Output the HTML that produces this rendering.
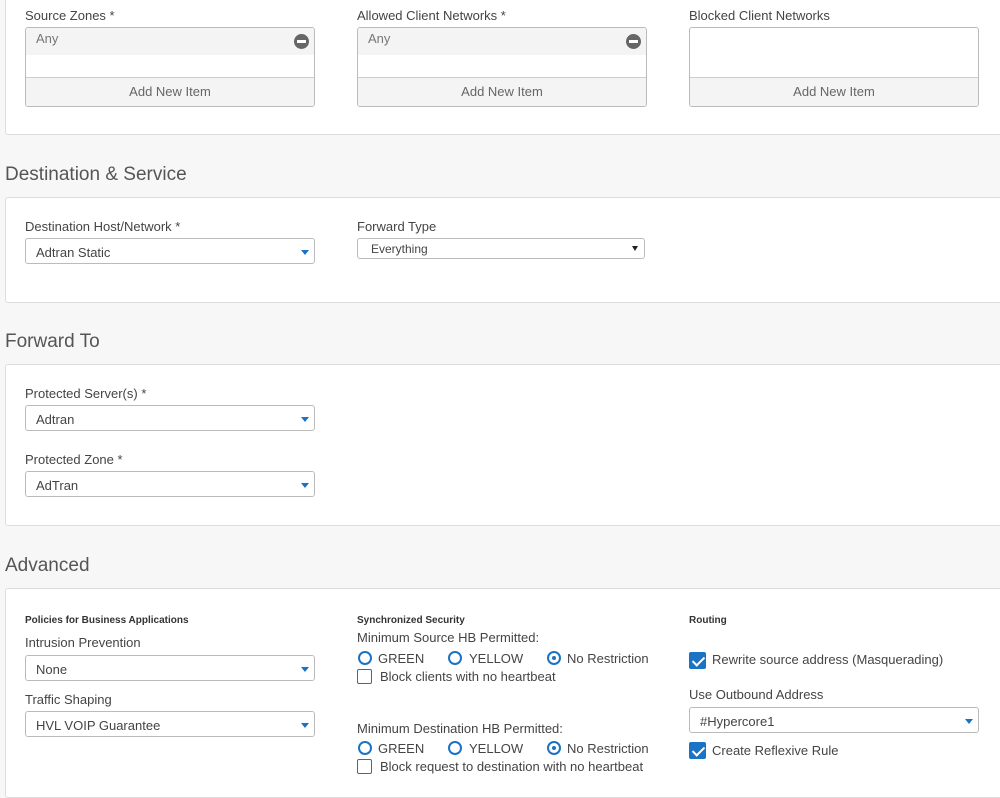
<!DOCTYPE html>
<html><head><style>
*{box-sizing:border-box;margin:0;padding:0}
body{width:1000px;height:782px;overflow:hidden;background:#f7f7f7;font-family:"Liberation Sans",sans-serif;color:#444;position:relative;font-size:13px}
.panel{position:absolute;left:5px;width:1000px;background:#fff;border:1px solid #ddd;border-radius:3px}
.h{position:absolute;left:5px;font-size:19px;color:#555}
.lbl{position:absolute;font-size:13px;color:#444}
.list{position:absolute;width:290px;height:80px;border:1px solid #bbb;border-radius:3px;overflow:hidden;background:#fff}
.list .it{height:27px;background:#f4f4f4;padding:3px 10px;color:#777;position:relative}
.list .add{position:absolute;bottom:0;left:0;right:0;height:29px;border-top:1px solid #ccc;background:#f4f4f5;text-align:center;line-height:28px;color:#666}
.min{position:absolute;right:5px;top:6px;width:15px;height:15px;border-radius:50%;background:#666}
.min:after{content:"";position:absolute;left:3px;top:6px;width:9px;height:3px;background:#fff}
.sel{position:absolute;width:290px;height:26px;border:1px solid #bbb;border-radius:3px;background:#fff;padding:0 10px;line-height:27px;color:#444}
.sel:after{content:"";position:absolute;right:5px;top:11px;border-left:4px solid transparent;border-right:4px solid transparent;border-top:5px solid #1a73c4}
.sel.ft:after{border-top-color:#222;top:7px;right:6px;border-left-width:3px;border-right-width:3px}
.sm{font-size:10px;font-weight:bold;color:#333;position:absolute}
.r{position:absolute;width:14px;height:14px;border:2px solid #1a73c4;border-radius:50%}
.r.on:after{content:"";position:absolute;left:3px;top:3px;width:4px;height:4px;border-radius:50%;background:#1a73c4}
.cb{position:absolute;width:15px;height:15px;border:1.5px solid #1a73c4;border-radius:2px}
.cb.on{background:#1a73c4;width:17px;height:17px}
.cb.on:after{content:"";position:absolute;left:5px;top:1px;width:5px;height:10px;border:solid #fff;border-width:0 2px 2px 0;transform:rotate(45deg)}
</style></head><body>
<div class="panel" style="top:-5px;height:140px"></div>
<div class="lbl" style="left:25px;top:8px">Source Zones *</div>
<div class="lbl" style="left:357px;top:8px">Allowed Client Networks *</div>
<div class="lbl" style="left:689px;top:8px">Blocked Client Networks</div>
<div class="list" style="left:25px;top:27px"><div class="it">Any<div class="min"></div></div><div class="add">Add New Item</div></div>
<div class="list" style="left:357px;top:27px"><div class="it">Any<div class="min"></div></div><div class="add">Add New Item</div></div>
<div class="list" style="left:689px;top:27px"><div class="add">Add New Item</div></div>

<div class="h" style="top:164px">Destination &amp; Service</div>
<div class="panel" style="top:197px;height:106px"></div>
<div class="lbl" style="left:25px;top:219px">Destination Host/Network *</div>
<div class="sel" style="left:25px;top:238px">Adtran Static</div>
<div class="lbl" style="left:357px;top:219px">Forward Type</div>
<div class="sel ft" style="left:357px;top:238px;width:288px;height:21px;line-height:20px;font-size:12px;padding-left:13px">Everything</div>

<div class="h" style="top:331px">Forward To</div>
<div class="panel" style="top:364px;height:162px"></div>
<div class="lbl" style="left:25px;top:386px">Protected Server(s) *</div>
<div class="sel" style="left:25px;top:405px">Adtran</div>
<div class="lbl" style="left:25px;top:452px">Protected Zone *</div>
<div class="sel" style="left:25px;top:471px">AdTran</div>

<div class="h" style="top:555px">Advanced</div>
<div class="panel" style="top:588px;height:210px"></div>
<div class="sm" style="left:25px;top:615px">Policies for Business Applications</div>
<div class="lbl" style="left:25px;top:635px">Intrusion Prevention</div>
<div class="sel" style="left:25px;top:655px">None</div>
<div class="lbl" style="left:25px;top:692px">Traffic Shaping</div>
<div class="sel" style="left:25px;top:711px">HVL VOIP Guarantee</div>

<div class="sm" style="left:357px;top:615px">Synchronized Security</div>
<div class="lbl" style="left:357px;top:630px">Minimum Source HB Permitted:</div>
<div class="r" style="left:358px;top:651px"></div><div class="lbl" style="left:378px;top:651px">GREEN</div>
<div class="r" style="left:448px;top:651px"></div><div class="lbl" style="left:469px;top:651px">YELLOW</div>
<div class="r on" style="left:547px;top:651px"></div><div class="lbl" style="left:567px;top:651px">No Restriction</div>
<div class="cb" style="left:357px;top:669px"></div><div class="lbl" style="left:380px;top:669px">Block clients with no heartbeat</div>
<div class="lbl" style="left:357px;top:721px">Minimum Destination HB Permitted:</div>
<div class="r" style="left:358px;top:741px"></div><div class="lbl" style="left:378px;top:741px">GREEN</div>
<div class="r" style="left:448px;top:741px"></div><div class="lbl" style="left:469px;top:741px">YELLOW</div>
<div class="r on" style="left:547px;top:741px"></div><div class="lbl" style="left:567px;top:741px">No Restriction</div>
<div class="cb" style="left:357px;top:759px"></div><div class="lbl" style="left:380px;top:759px">Block request to destination with no heartbeat</div>

<div class="sm" style="left:689px;top:615px">Routing</div>
<div class="cb on" style="left:689px;top:652px"></div><div class="lbl" style="left:712px;top:652px">Rewrite source address (Masquerading)</div>
<div class="lbl" style="left:689px;top:687px">Use Outbound Address</div>
<div class="sel" style="left:689px;top:707px">#Hypercore1</div>
<div class="cb on" style="left:689px;top:742px"></div><div class="lbl" style="left:712px;top:743px">Create Reflexive Rule</div>
</body></html>
